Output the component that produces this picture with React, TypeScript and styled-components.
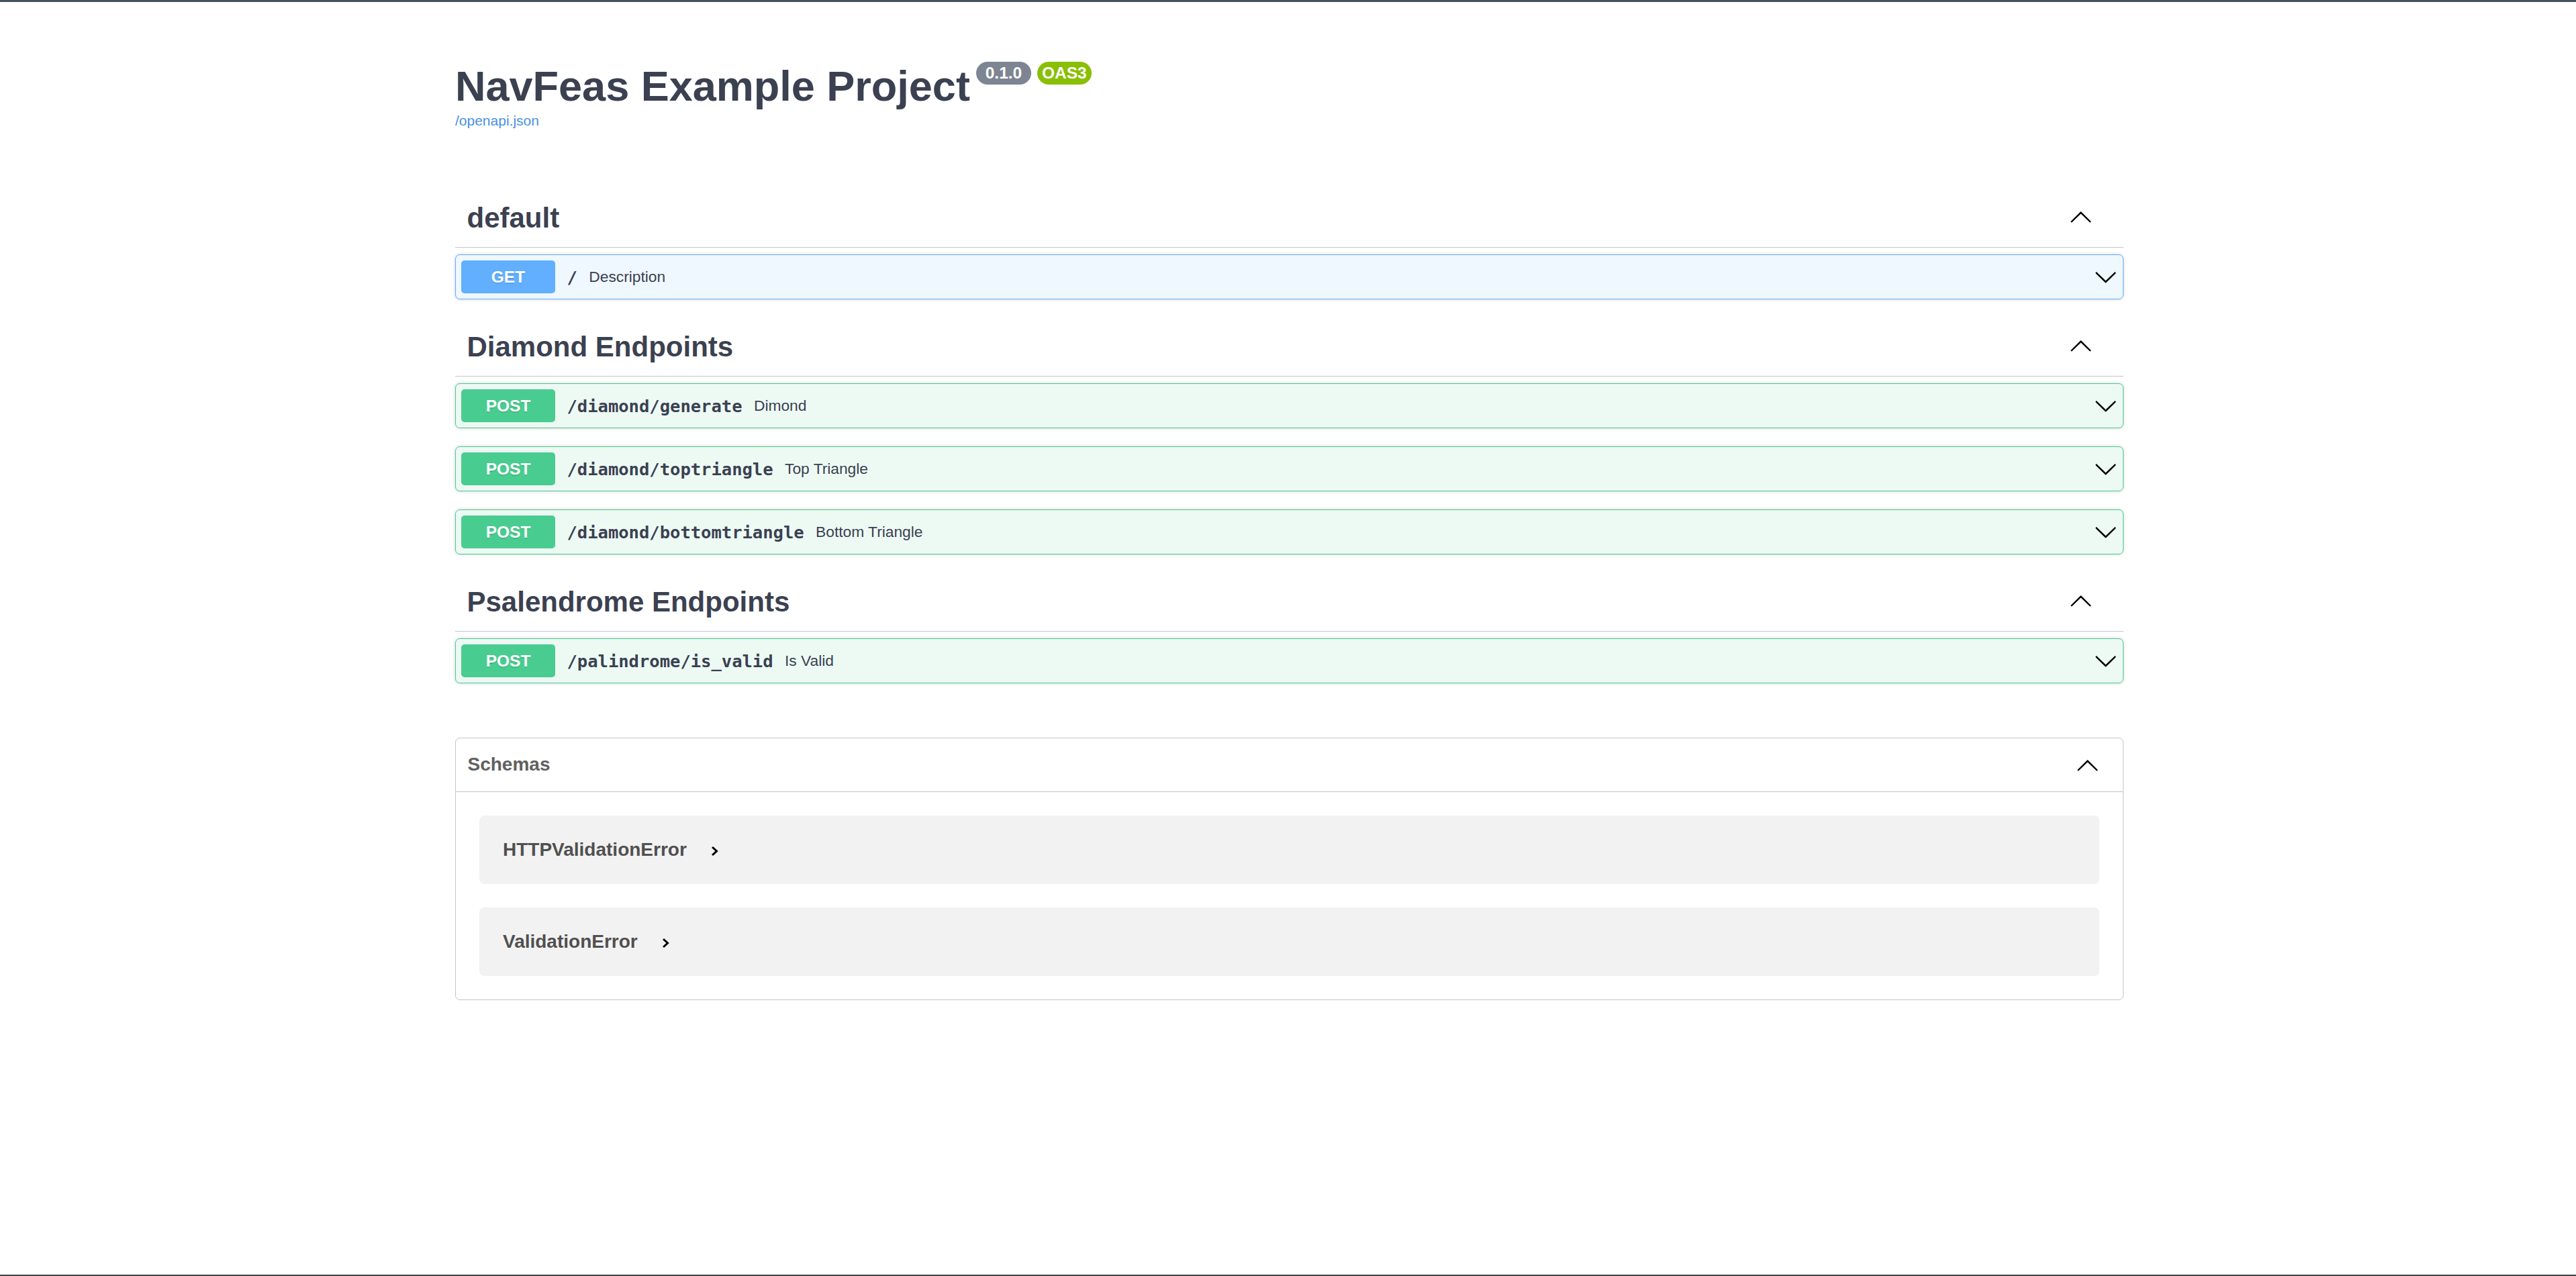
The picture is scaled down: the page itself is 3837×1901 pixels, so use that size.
import React from "react";
import styled, { createGlobalStyle } from "styled-components";

const GlobalStyle = createGlobalStyle`
  html, body { margin: 0; padding: 0; background: #ffffff; }
  body { font-family: "Liberation Sans", Arial, sans-serif; }
  * { box-sizing: border-box; }
`;

const Frame = styled.div`
  min-height: 1901px;
  padding-left: 4px;
  border-top: 3px solid #44525c;
  border-bottom: 2px solid #3d4347;
`;

const Wrapper = styled.main`
  width: 2485px;
  margin: 0 auto;
  padding-top: 89px;
  display: flex;
  flex-direction: column;
`;

const Info = styled.header`
  margin-bottom: 90px;
`;

const TitleRow = styled.div`
  display: flex;
  align-items: flex-start;
`;

const Title = styled.h2`
  margin: 0;
  font-size: 63px;
  line-height: 72px;
  font-weight: 700;
  color: #3b4151;
`;

const Badge = styled.span<{ $bg: string }>`
  margin-left: 9px;
  background: ${(p) => p.$bg};
  border-radius: 100px;
  padding: 3px 7px;
  color: #ffffff;
  font-size: 24.5px;
  line-height: 28px;
  font-weight: 700;
  white-space: pre;
`;

const SpecLink = styled.a`
  display: block;
  margin-top: 4px;
  font-size: 21px;
  line-height: 24px;
  color: #4990e2;
  text-decoration: none;
`;

const TagSection = styled.section`
  margin-bottom: 1px;
`;

const TagHeader = styled.h3`
  display: flex;
  align-items: center;
  margin: 0 0 10px;
  padding: 17.5px 46.5px 17.5px 17.5px;
  min-height: 87px;
  border-bottom: 1px solid rgba(59, 65, 81, 0.3);
  font-size: 42px;
  line-height: 48px;
  font-weight: 700;
  color: #3b4151;
`;

const TagName = styled.span`
  flex: 1;
`;

const TagArrowBox = styled.span`
  display: flex;
  margin-bottom: 6px;
`;

const Opblock = styled.div<{ $c: string; $bg: string }>`
  margin-bottom: 27px;
  border: 1px solid ${(p) => p.$c};
  background: ${(p) => p.$bg};
  border-radius: 7px;
  box-shadow: 0 0 5px rgba(0, 0, 0, 0.19);
`;

const Summary = styled.div`
  display: flex;
  align-items: center;
  padding: 8px;
`;

const Method = styled.span<{ $c: string }>`
  min-width: 140px;
  padding: 10.5px 0;
  text-align: center;
  font-size: 24.5px;
  line-height: 28px;
  font-weight: 700;
  color: #ffffff;
  background: ${(p) => p.$c};
  border-radius: 5px;
  text-shadow: 0 1.75px 0 rgba(0, 0, 0, 0.1);
`;

const Path = styled.span`
  padding: 0 17.5px;
  font-family: "DejaVu Sans Mono", monospace;
  font-size: 25.5px;
  font-weight: 700;
  color: #3b4151;
`;

const Desc = styled.span`
  flex: 1;
  font-size: 22.75px;
  color: #3b4151;
`;

const Arrow = styled.svg`
  width: 35px;
  height: 35px;
  flex: none;
  fill: #000000;
`;

const Models = styled.section`
  margin-top: 52.5px;
  border: 1px solid rgba(59, 65, 81, 0.3);
  border-radius: 7px;
`;

const ModelsHeader = styled.h4`
  display: flex;
  align-items: center;
  margin: 0;
  padding: 17.5px 35px 17.5px 17.5px;
  min-height: 80px;
  border-bottom: 1px solid rgba(59, 65, 81, 0.3);
  font-size: 28px;
  font-weight: 700;
  color: #606060;
`;

const ModelsBody = styled.div`
  display: flex;
  flex-direction: column;
  gap: 35px;
  padding: 35px;
`;

const ModelContainer = styled.div`
  display: flex;
  align-items: center;
  height: 102px;
  padding: 0 35px;
  background: rgba(0, 0, 0, 0.05);
  border-radius: 7px;
`;

const ModelTitle = styled.span`
  font-size: 28px;
  font-weight: 700;
  color: #505050;
`;

const Toggle = styled.svg`
  width: 11px;
  height: 16px;
  margin-left: 36px;
  margin-top: 4px;
`;

const DOWN =
  "M17.418 6.109c.272-.268.709-.268.979 0s.271.701 0 .969l-7.908 7.83c-.27.268-.707.268-.979 0l-7.908-7.83c-.27-.268-.27-.701 0-.969.271-.268.709-.268.979 0L10 13.25l7.418-7.141z";
const UP =
  "M17.418 14.908C17.69 15.176 18.127 15.176 18.397 14.908C18.667 14.64 18.668 14.207 18.397 13.939L10.489 6.109C10.219 5.841 9.782 5.841 9.51 6.109L1.602 13.939C1.332 14.207 1.332 14.64 1.602 14.908C1.873 15.176 2.311 15.176 2.581 14.908L10 7.767L17.418 14.908Z";

const ChevronUp = () => (
  <Arrow viewBox="0 0 20 20">
    <path d={UP} />
  </Arrow>
);

const ChevronDown = () => (
  <Arrow viewBox="0 0 20 20">
    <path d={DOWN} />
  </Arrow>
);

type Op = { method: "GET" | "POST"; path: string; desc: string };

const COLORS = {
  GET: { c: "#61affe", bg: "#eff7ff" },
  POST: { c: "#49cc90", bg: "#edfaf4" },
};

const tags: { name: string; ops: Op[] }[] = [
  { name: "default", ops: [{ method: "GET", path: "/", desc: "Description" }] },
  {
    name: "Diamond Endpoints",
    ops: [
      { method: "POST", path: "/diamond/generate", desc: "Dimond" },
      { method: "POST", path: "/diamond/toptriangle", desc: "Top Triangle" },
      { method: "POST", path: "/diamond/bottomtriangle", desc: "Bottom Triangle" },
    ],
  },
  {
    name: "Psalendrome Endpoints",
    ops: [{ method: "POST", path: "/palindrome/is_valid", desc: "Is Valid" }],
  },
];

const schemas = ["HTTPValidationError", "ValidationError"];

export default function App() {
  return (
    <>
      <GlobalStyle />
      <Frame>
        <Wrapper>
          <Info>
            <TitleRow>
              <Title>NavFeas Example Project</Title>
              <Badge $bg="#7d8492">{" 0.1.0 "}</Badge>
              <Badge $bg="#89bf04">OAS3</Badge>
            </TitleRow>
            <SpecLink href="#">/openapi.json</SpecLink>
          </Info>
          {tags.map((t) => (
            <TagSection key={t.name}>
              <TagHeader>
                <TagName>{t.name}</TagName>
                <TagArrowBox>
                  <ChevronUp />
                </TagArrowBox>
              </TagHeader>
              {t.ops.map((o) => (
                <Opblock key={o.path} $c={COLORS[o.method].c} $bg={COLORS[o.method].bg}>
                  <Summary>
                    <Method $c={COLORS[o.method].c}>{o.method}</Method>
                    <Path>{o.path}</Path>
                    <Desc>{o.desc}</Desc>
                    <ChevronDown />
                  </Summary>
                </Opblock>
              ))}
            </TagSection>
          ))}
          <Models>
            <ModelsHeader>
              <TagName>Schemas</TagName>
              <ChevronUp />
            </ModelsHeader>
            <ModelsBody>
              {schemas.map((s) => (
                <ModelContainer key={s}>
                  <ModelTitle>{s}</ModelTitle>
                  <Toggle viewBox="0 0 11 16">
                    <polyline points="2,2 8.5,8 2,14" fill="none" stroke="#000" strokeWidth="3" />
                  </Toggle>
                </ModelContainer>
              ))}
            </ModelsBody>
          </Models>
        </Wrapper>
      </Frame>
    </>
  );
}
